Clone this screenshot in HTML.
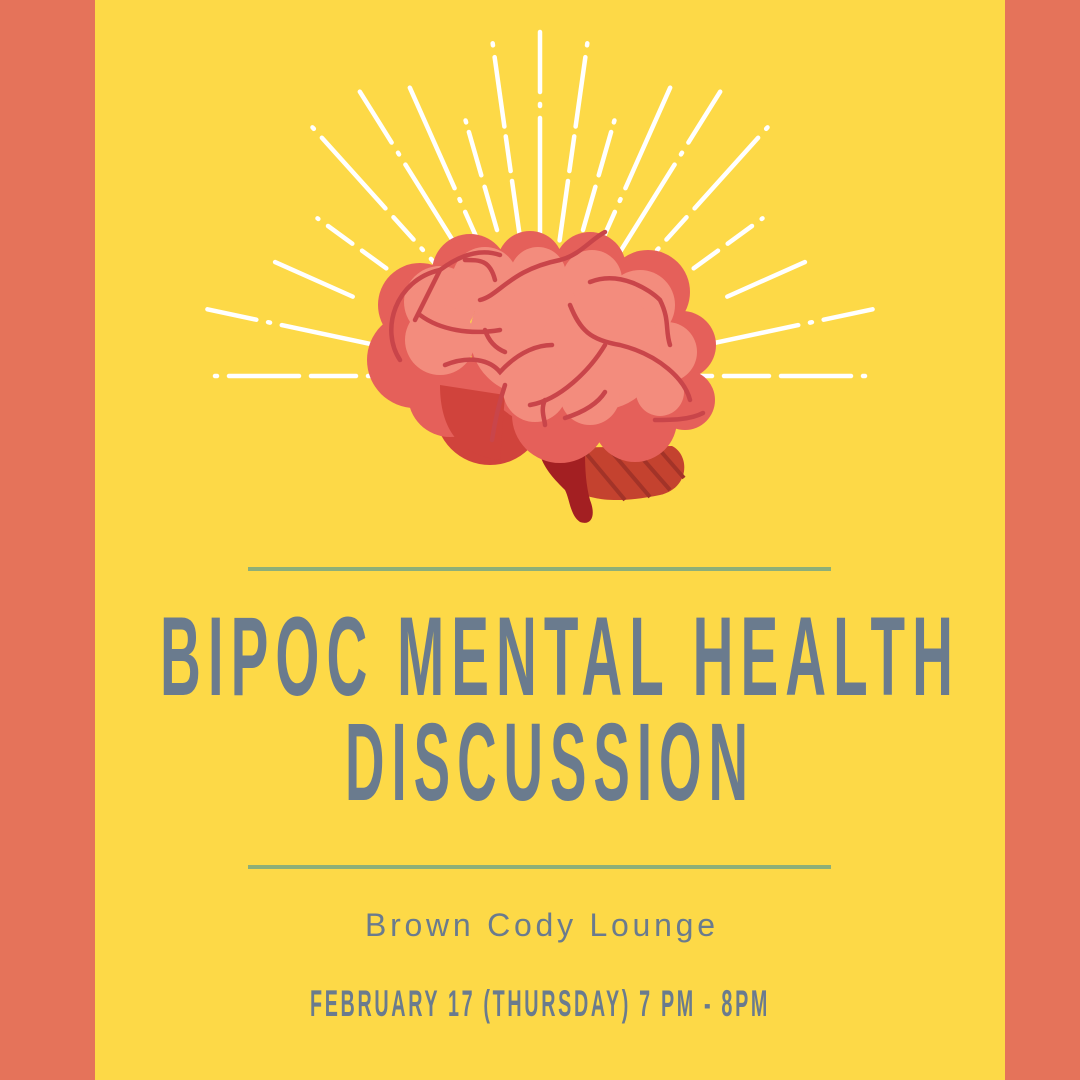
<!DOCTYPE html>
<html><head><meta charset="utf-8"><style>
html,body{margin:0;padding:0;width:1080px;height:1080px;overflow:hidden;background:#FDD947}
</style></head><body>
<svg width="1080" height="1080" viewBox="0 0 1080 1080" xmlns="http://www.w3.org/2000/svg">
<rect width="1080" height="1080" fill="#FDD947"/>
<rect x="0" y="0" width="95" height="1080" fill="#E5735A"/>
<rect x="1005" y="0" width="75" height="1080" fill="#E5735A"/>
<g stroke="#fff" stroke-width="4.5" stroke-linecap="round" fill="none">
<line x1="215" y1="376" x2="400" y2="376" stroke-dasharray="2 12 70 12 45 12 40 12"/>
<line x1="865" y1="376" x2="680" y2="376" stroke-dasharray="2 12 70 12 45 12 40 12"/>
<g transform="rotate(12 540 380)"><line x1="200" y1="380" x2="400" y2="380" stroke-dasharray="50 12 2 12 200"/></g>
<g transform="rotate(168 540 380)"><line x1="200" y1="380" x2="400" y2="380" stroke-dasharray="50 12 2 12 200"/></g>
<g transform="rotate(24 540 380)"><line x1="250" y1="380" x2="420" y2="380" stroke-dasharray="85 200"/></g>
<g transform="rotate(156 540 380)"><line x1="250" y1="380" x2="420" y2="380" stroke-dasharray="85 200"/></g>
<g transform="rotate(36 540 380)"><line x1="265" y1="380" x2="420" y2="380" stroke-dasharray="1 12 30 12 30 200"/></g>
<g transform="rotate(144 540 380)"><line x1="265" y1="380" x2="420" y2="380" stroke-dasharray="1 12 30 12 30 200"/></g>
<g transform="rotate(48 540 380)"><line x1="200" y1="380" x2="420" y2="380" stroke-dasharray="2 12 95 12 30 12 2 12 40"/></g>
<g transform="rotate(132 540 380)"><line x1="200" y1="380" x2="420" y2="380" stroke-dasharray="2 12 95 12 30 12 2 12 40"/></g>
<g transform="rotate(58 540 380)"><line x1="200" y1="380" x2="420" y2="380" stroke-dasharray="60 12 2 12 120"/></g>
<g transform="rotate(122 540 380)"><line x1="200" y1="380" x2="420" y2="380" stroke-dasharray="60 12 2 12 120"/></g>
<g transform="rotate(66 540 380)"><line x1="220" y1="380" x2="420" y2="380" stroke-dasharray="110 12 2 12 200"/></g>
<g transform="rotate(114 540 380)"><line x1="220" y1="380" x2="420" y2="380" stroke-dasharray="110 12 2 12 200"/></g>
<g transform="rotate(74 540 380)"><line x1="270" y1="380" x2="420" y2="380" stroke-dasharray="2 10 45 12 45 200"/></g>
<g transform="rotate(106 540 380)"><line x1="270" y1="380" x2="420" y2="380" stroke-dasharray="2 10 45 12 45 200"/></g>
<g transform="rotate(82 540 380)"><line x1="200" y1="380" x2="420" y2="380" stroke-dasharray="2 12 70 10 35 10 60 200"/></g>
<g transform="rotate(98 540 380)"><line x1="200" y1="380" x2="420" y2="380" stroke-dasharray="2 12 70 10 35 10 60 200"/></g>
<line x1="540" y1="32" x2="540" y2="250" stroke-dasharray="60 12 2 12 200"/>
</g>
<!-- brain -->
<path d="M545,448 C560,505 610,505 660,495 C690,488 690,455 672,446 Z" fill="#C4422F"/>
<g stroke="#A33328" stroke-width="4"><line x1="585" y1="452" x2="625" y2="500"/><line x1="610" y1="450" x2="650" y2="497"/><line x1="635" y1="450" x2="670" y2="490"/><line x1="658" y1="448" x2="684" y2="478"/></g>
<path d="M540,455 C545,470 555,480 565,490 C570,500 570,515 580,522 C592,526 596,515 590,500 C586,485 585,470 585,452 Z" fill="#A31F22"/>
<g fill="#D0433C"><circle cx="490" cy="410" r="55"/></g>
<g fill="#E5605A">
<circle cx="420" cy="305" r="42"/><circle cx="470" cy="272" r="38"/><circle cx="530" cy="264" r="33"/><circle cx="590" cy="268" r="36"/><circle cx="648" cy="292" r="42"/><circle cx="682" cy="345" r="34"/><circle cx="685" cy="400" r="30"/><circle cx="415" cy="360" r="48"/><circle cx="450" cy="395" r="42"/>
<circle cx="560" cy="415" r="48"/><circle cx="635" cy="420" r="42"/><circle cx="560" cy="340" r="90"/>
</g>
<path d="M440,385 C440,430 460,455 500,460 L505,395 Z" fill="#D0433C"/>
<g fill="#F38C7D">
<circle cx="440" cy="302" r="36"/><circle cx="485" cy="280" r="33"/><circle cx="538" cy="275" r="28"/><circle cx="592" cy="280" r="30"/><circle cx="640" cy="305" r="35"/><circle cx="667" cy="352" r="30"/><circle cx="660" cy="392" r="24"/><circle cx="440" cy="340" r="35"/><circle cx="530" cy="335" r="60"/><circle cx="600" cy="350" r="60"/><circle cx="590" cy="395" r="30"/><circle cx="535" cy="390" r="32"/>
</g>
<g stroke="#C9454A" stroke-width="4.5" fill="none" stroke-linecap="round">
<path d="M400,360 C380,330 395,280 440,270 C460,255 480,248 500,255"/>
<path d="M440,270 C430,290 420,310 415,320 M420,315 C440,330 470,335 500,330 M485,330 C490,345 500,350 505,352"/>
<path d="M465,260 C480,260 490,260 495,280"/>
<path d="M480,300 C500,295 510,270 560,260 C580,255 590,240 605,232"/>
<path d="M590,282 C620,270 650,290 660,300 C670,320 665,330 670,345"/>
<path d="M570,305 C580,330 590,340 620,345 C660,355 685,380 690,400"/>
<path d="M605,345 C590,370 560,400 530,405 M545,400 C540,410 545,420 545,425"/>
<path d="M445,365 C470,355 490,360 500,372 C520,350 540,345 552,345"/>
<path d="M505,385 C500,400 495,420 492,440"/>
<path d="M565,418 C590,410 600,400 605,392"/>
<path d="M655,420 C670,420 690,420 703,413"/>
</g>
<!-- lines -->
<rect x="248" y="567" width="583" height="4" fill="#8DAF78"/>
<rect x="248" y="865" width="583" height="4" fill="#8DAF78"/>
<g fill="#6A7B8E" font-family="Liberation Sans, sans-serif" font-weight="bold">
<text x="160" y="695" font-size="112" letter-spacing="14" textLength="800" lengthAdjust="spacingAndGlyphs">BIPOC MENTAL HEALTH</text>
<text x="345" y="800" font-size="110" letter-spacing="14" textLength="410" lengthAdjust="spacingAndGlyphs">DISCUSSION</text>
<text x="310" y="1016" font-size="37" letter-spacing="5" textLength="460" lengthAdjust="spacingAndGlyphs">FEBRUARY 17 (THURSDAY) 7 PM - 8PM</text>
</g>
<text x="365" y="936" font-family="Liberation Sans, sans-serif" font-size="32" fill="#6A7B8E" textLength="350" lengthAdjust="spacing">Brown Cody Lounge</text>
</svg>
</body></html>
